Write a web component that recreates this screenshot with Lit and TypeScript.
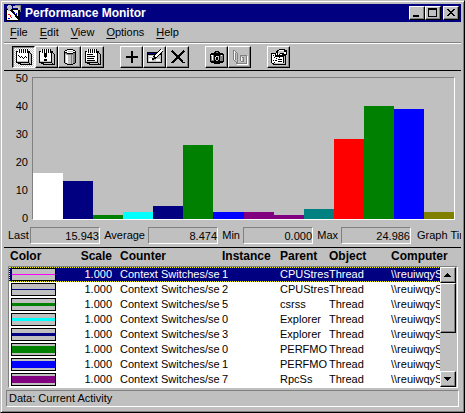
import { LitElement, html, css, svg, TemplateResult } from "lit";
import { customElement, property } from "lit/decorators.js";
import { classMap } from "lit/directives/class-map.js";

const AXIS = [50, 40, 30, 20, 10, 0];
const BARS: [number, string][] = [
  [16.3, "#ffffff"], [13.5, "#000080"], [1.4, "#008000"], [2.5, "#00ffff"],
  [4.6, "#000080"], [26.2, "#008000"], [2.5, "#0000ff"], [2.5, "#800080"],
  [1.4, "#800080"], [3.5, "#008080"], [28.4, "#ff0000"], [40.1, "#008000"],
  [39, "#0000ff"], [2.5, "#808000"],
];
const STATS = [["Last", "15.943"], ["Average", "8.474"], ["Min", "0.000"], ["Max", "24.986"]];
const HEADINGS = ["Color", "Scale", "Counter", "Instance", "Parent", "Object", "Computer"];

interface Row { color: string; width: number; instance: string; parent: string; }
const ROWS: Row[] = [
  { color: "#ff00ff", width: 1, instance: "1", parent: "CPUStres" },
  { color: "#000080", width: 1, instance: "2", parent: "CPUStres" },
  { color: "#008000", width: 3, instance: "5", parent: "csrss" },
  { color: "#00ffff", width: 3, instance: "0", parent: "Explorer" },
  { color: "#000080", width: 3, instance: "3", parent: "Explorer" },
  { color: "#008000", width: 7, instance: "0", parent: "PERFMO" },
  { color: "#0000ff", width: 7, instance: "1", parent: "PERFMO" },
  { color: "#800080", width: 7, instance: "7", parent: "RpcSs" },
];

const pad = svg`
  <path fill="#000" d="M0 2h14v2h1v1h1v11H4v-1H2v-1H0z"/>
  <path fill="#fff" d="M1 3h11v9H1z"/>
  <path fill="#c0c0c0" d="M1 12h11v1H1zM13 4h1v10H3v-1h10zM14 5h1v10H5v-1h9z"/>
  <path fill="#000" d="M12 3h1v10H1v1h12zM14 5v9h-1v1h1z"/>
  <path fill="#fff" d="M2 0h1v2H2zM4 0h1v2H4zM6 0h1v2H6zM8 0h1v2H8zM10 0h1v2h-1zM2 3h1v1H2z"/>
  <path fill="#000" d="M3 0h1v4H3zM5 0h1v4H5zM7 0h1v4H7zM9 0h1v4H9zM11 0h1v4h-1z"/>
  <path fill="#fff" d="M2 2h1v1H2zM4 2h1v1H4zM6 2h1v1H6zM8 2h1v1H8zM10 2h1v1h-1z"/>`;

const ICONS: Record<string, TemplateResult> = {
  chart: svg`${pad}<path fill="#000" d="M2 6h1v1H2zM3 7h1v1H3zM4 8h1v1H4zM5 7h1v1H5zM6 8h1v1H6zM7 9h1v1H7zM8 8h1v1H8zM9 7h1v1H9zM10 8h1v1h-1z"/>`,
  alert: svg`${pad}<path fill="#000" d="M5 4h3v4H5zM6 8h1v1H6zM5 10h3v2H5z"/>`,
  log: svg`
    <path fill="#000" d="M5 0h6v1h2v1h1v12h-1v1h-2v1H5v-1H3v-1H2V2h1V1h2z"/>
    <path fill="#c0c0c0" d="M3 5h2v1h6V5h2v9h-2v1H5v-1H3z"/>
    <path fill="#fff" d="M5 1h6v1h2v1h-2v1H5V3H3V2h2zM4 6h2v8H4z"/>
    <path fill="#c0c0c0" d="M6 2h5v1H6z"/>
    <path fill="#808080" d="M3 4h2v1H3zM5 5h6v1H5zM11 4h2v1h-2zM9 6h1v9H9zM11 5h2v9h-2z"/>`,
  report: svg`${pad}<path fill="#000" d="M2 5h6v1H2zM2 7h8v1H2zM2 9h7v1H2zM2 11h8v1H2z"/>`,
  add: svg`<path fill="#000" d="M7 2h2v5h5v2H9v5H7V9H2V7h5z"/>`,
  modify: svg`
    <path fill="#000" d="M0 3h15v11H0z"/>
    <path fill="#c0c0c0" d="M1 6h13v7H1z"/>
    <path fill="#000080" d="M1 4h10v1H1z"/>
    <path fill="#fff" d="M2 7h4v1H2zM2 9h3v3H2zM9 10h4v2H9z"/>
    <path stroke="#000" fill="none" stroke-width="4" d="M15 1L7 9"/>
    <path stroke="#fff" fill="none" stroke-width="1.5" d="M15 1L8 8"/>
    <path fill="#000" d="M5 9h3v1H7v1H5z"/>`,
  remove: svg`
    <path stroke="#000" fill="none" stroke-width="2.4" d="M2 2l11 11"/>
    <path stroke="#000" fill="none" stroke-width="1.5" d="M14 2L2 14"/>
    <path fill="#000" d="M12 13h3v1h-3zM1 13h2v1H1z"/>`,
  camera: svg`
    <path fill="#000" d="M2 4h3V3h1V2h4v1h1v1h3v1h1v8h-1v1h-3v1H5v-1H2v-1H1V5h1z"/>
    <path fill="#808080" d="M2 6h3v6H2zM11 6h3v6h-3zM7 3h2v1H7z"/>
    <path fill="#fff" d="M2 6h2v1H2zM3 7h1v4H3zM12 6h1v1h-1zM7 7h1v1H7zM6 8h1v1H6z"/>
    <path fill="#c0c0c0" d="M8 7h2v1H8zM9 8h1v3H9zM7 11h2v1H7zM6 9h1v2H6z"/>`,
  bookmark: svg`
    <path fill="#fff" d="M2 2h1v10H2zM3 12h1v1H3zM4 13h1v1H4zM5 15h11v1H5zM15 7h1v9h-1zM9 8h1v4H9z"/>
    <path fill="#808080" d="M1 1h1v10H1zM2 1h1v1H2zM3 2h1v1H3zM4 3h1v1H4zM5 4h1v11H5zM2 11h1v1H2zM3 12h1v1H3zM4 13h1v2H4zM6 14h9v1H6zM14 6h1v8h-1zM8 6h6v1H8zM8 7h1v5H8zM9 12h3v1H9zM11 8h1v4h-1zM10 8h1v1h-1zM3 4h1v7H3z"/>`,
  options: svg`
    <path fill="#000" d="M0 4h5V2h1V1h2V0h6v1h2v5h-1v10H2v-1H1v-1H0z"/>
    <path fill="#fff" d="M1 5h3v9H1zM4 8h8v6H4zM8 1h5v1H8z"/>
    <path fill="#c0c0c0" d="M13 7h1v8H3v-1h10zM7 2h6v2H9v1H7z"/>
    <path fill="#fff" d="M5 4h1v2H5zM7 4h1v2H7zM9 5h2v1H9zM13 3h2v2h-2z"/>
    <path fill="#000" d="M2 6h1v1H2zM3 8h1v1H3zM5 9h1v1H5zM8 8h1v1H8zM2 11h1v1H2zM4 11h2v1H4zM7 10h4v1H7zM7 12h4v1H7zM3 13h1v1H3z"/>`,
};

const TOOLS: [string, string][][] = [
  [["chart", "Chart view"], ["alert", "Alert view"], ["log", "Log view"], ["report", "Report view"]],
  [["add", "Add counter"], ["modify", "Modify counter"], ["remove", "Delete counter"]],
  [["camera", "Update now"], ["bookmark", "Place bookmark"]],
  [["options", "Options"]],
];

@customElement("tool-button")
class ToolButton extends LitElement {
  @property() icon = "";
  @property() label = "";
  @property({ type: Boolean }) pressed = false;

  static styles = css`
    :host { display: block; }
    .tool {
      box-sizing: border-box;
      display: flex;
      align-items: center;
      justify-content: center;
      width: 23px;
      height: 22px;
      padding: 0;
      border: 1px solid;
      border-color: #fff #000 #000 #fff;
      box-shadow: inset -1px -1px #808080;
      background: #c0c0c0;
    }
    .pressed {
      border-color: #000 #fff #fff #000;
      box-shadow: inset 1px 1px #808080;
      background: repeating-conic-gradient(#fff 0 25%, #c0c0c0 0 50%) 0 0 / 2px 2px;
    }
    .icon { display: block; width: 16px; height: 16px; }
  `;

  render() {
    return html`<button class=${classMap({ tool: true, pressed: this.pressed })} aria-label=${this.label}
      ?disabled=${this.icon === "bookmark"}>
      <svg class="icon" viewBox="0 0 16 16" shape-rendering="crispEdges" aria-hidden="true">${ICONS[this.icon]}</svg>
    </button>`;
  }
}

@customElement("counter-chart")
class CounterChart extends LitElement {
  static styles = css`
    :host { display: flex; gap: 4px; padding: 0 6px 0 11px; }
    .axis {
      display: flex;
      flex-direction: column;
      justify-content: space-between;
      flex: 0 0 13px;
      line-height: 15px;
      text-align: right;
    }
    .plot {
      flex: 1;
      display: flex;
      align-items: flex-end;
      margin: 6px 0;
      border: 1px solid;
      border-color: #808080 #fff #fff #808080;
    }
    .bar { flex: 1; }
  `;

  render() {
    return html`
      <div class="axis">${AXIS.map((n) => html`<span>${n}</span>`)}</div>
      <div class="plot" role="img" aria-label="Counter values">
        ${BARS.map(([v, c]) => html`<div class="bar" style="height:${v * 2}%;background:${c}"></div>`)}
      </div>`;
  }
}

@customElement("counter-legend")
class CounterLegend extends LitElement {
  static styles = css`
    :host { display: block; position: relative; }
    .legend, .head, .body { display: block; }
    .line {
      display: grid;
      grid-template-columns: 47px 56px 8px 102px 58px 49px 62px minmax(0, 1fr);
      text-align: left;
      white-space: nowrap;
    }
    .head .line { height: 18px; padding-left: 1px; line-height: 17px; font-size: 12px; }
    .cell { padding: 0; overflow: hidden; font-weight: inherit; }
    .head .cell { font-weight: bold; overflow: visible; }
    .color { padding-left: 2px; }
    .head .color { padding-left: 1px; }
    .scale { grid-column: 2; text-align: right; }
    .counter { grid-column: 4; }
    .body {
      border: 1px solid;
      border-color: #808080 #fff #fff #808080;
      background: #fff;
      line-height: 15px;
    }
    .body .line { height: 15px; padding-right: 17px; }
    .selected {
      background: #000080;
      color: #fff;
      outline: 1px dotted #ff0;
      outline-offset: -1px;
    }
    .swatch {
      box-sizing: border-box;
      display: flex;
      align-items: center;
      height: 13px;
      margin-top: 1px;
      border: 1px solid #000;
      background: #c0c0c0;
    }
    .stroke { width: 100%; }
    .scroll {
      position: absolute;
      top: 19px;
      right: 1px;
      bottom: 1px;
      width: 17px;
      display: flex;
      flex-direction: column;
      background: #c0c0c0;
    }
    .arrow, .thumb {
      box-sizing: border-box;
      width: 16px;
      border: 1px solid;
      border-color: #fff #000 #000 #fff;
      box-shadow: inset -1px -1px #808080;
      background: #c0c0c0;
    }
    .arrow { display: grid; place-items: center; height: 16px; padding: 0; }
    .glyph { display: block; width: 8px; height: 4px; }
    .thumb { height: 50px; }
    .track { flex: 1; }
  `;

  render() {
    return html`
      <table class="legend">
        <thead class="head">
          <tr class="line">
            ${HEADINGS.map((h) => html`<th class="cell ${h.toLowerCase()}" scope="col">${h}</th>`)}
          </tr>
        </thead>
        <tbody class="body">
          ${ROWS.map((r, i) => html`<tr class=${classMap({ line: true, selected: i === 0 })}>
            <td class="cell color"><div class="swatch"><div class="stroke" style="height:${r.width}px;background:${r.color}"></div></div></td>
            <td class="cell scale">1.000</td>
            <td class="cell counter">Context Switches/se</td>
            <td class="cell">${r.instance}</td>
            <td class="cell">${r.parent}</td>
            <td class="cell">Thread</td>
            <td class="cell">\\\\reuiwqyS</td>
          </tr>`)}
        </tbody>
      </table>
      <div class="scroll">
        <button class="arrow" aria-label="Scroll up"><svg class="glyph" viewBox="0 0 8 4" shape-rendering="crispEdges"><path d="M3 0h1v1h1v1h1v1h1v1H0V3h1V2h1V1h1z"/></svg></button>
        <div class="thumb"></div>
        <div class="track"></div>
        <button class="arrow" aria-label="Scroll down"><svg class="glyph" viewBox="0 0 8 4" shape-rendering="crispEdges"><path d="M0 0h7v1H6v1H5v1H4v1H3V3H2V2H1V1H0z"/></svg></button>
      </div>`;
  }
}

@customElement("app-root")
class AppRoot extends LitElement {
  static styles = css`
    :host {
      box-sizing: border-box;
      display: flex;
      flex-direction: column;
      min-height: 100vh;
      padding: 3px;
      border: 1px solid;
      border-color: #c0c0c0 #000 #000 #c0c0c0;
      box-shadow: inset 1px 1px #fff, inset -1px -1px #808080;
      background: #c0c0c0;
      color: #000;
      font: 11px/15px "Liberation Sans", sans-serif;
      overflow: hidden;
    }
    .title {
      display: flex;
      align-items: center;
      height: 18px;
      padding: 0 2px;
      background: #000080;
      color: #fff;
    }
    .logo { width: 16px; height: 16px; margin-right: 3px; }
    .name { flex: 1; margin: 0; font: bold 12px/18px "Liberation Sans", sans-serif; }
    .control {
      box-sizing: border-box;
      display: grid;
      place-items: center;
      width: 16px;
      height: 14px;
      padding: 0;
      border: 1px solid;
      border-color: #fff #000 #000 #fff;
      box-shadow: inset -1px -1px #808080;
      background: #c0c0c0;
    }
    .close { margin-left: 2px; }
    .sign { display: block; width: 10px; height: 10px; }
    .menu {
      display: flex;
      height: 20px;
      border-bottom: 1px solid #808080;
    }
    .item {
      padding: 0 6px;
      border: 0;
      background: none;
      color: inherit;
      font: inherit;
    }
    .key { text-decoration: underline; text-underline-offset: 2px; }
    .tools {
      display: flex;
      gap: 16px;
      padding: 2px 8px;
      border-top: 1px solid #fff;
      border-bottom: 1px solid #000;
    }
    .group { display: flex; }
    .chart { flex: 1; min-height: 155px; }
    .stats {
      display: grid;
      grid-template-columns: 22px 70px 48px 70px 25px 70px 28px 70px minmax(0, 1fr);
      padding: 1px 0 3px 4px;
      border-bottom: 1px solid #000;
      line-height: 17px;
      white-space: nowrap;
    }
    .label { padding-right: 3px; text-align: right; }
    .value {
      box-sizing: border-box;
      height: 17px;
      border: 1px solid;
      border-color: #808080 #fff #fff #808080;
      text-align: right;
    }
    .time { padding-left: 6px; overflow: hidden; }
    .legend { margin: 0 3px 2px 4px; }
    .status {
      margin: 0 2px 2px;
      padding: 0 2px;
      border: 1px solid;
      border-color: #808080 #fff #fff #808080;
    }
  `;

  render() {
    return html`
      <header class="title">
        <svg class="logo" viewBox="0 0 16 16" shape-rendering="crispEdges" aria-hidden="true">
          <path fill="#000" d="M0 4h14v12H0z"/>
          <path fill="#fff" d="M1 5h11v10H1z"/>
          <path fill="#c0c0c0" d="M2 0h3v1h1v3H5v2H2V4H1V1h1zM7 1h7v2H7zM12 3h3v2h-3z"/>
          <path fill="#808080" d="M9 0h6v1H9zM14 1h1v6h-1zM1 3h1v1H1z"/>
          <path stroke="#000" fill="none" stroke-width="2" d="M5 5l8 9"/>
          <path fill="#f00" d="M2 9h2v1H2zM4 10h1v2H4zM5 12h1v1H5z"/>
          <path fill="#00f" d="M2 13h2v1H2zM8 7h1v1H8zM10 8h1v2h-1z"/>
        </svg>
        <h1 class="name">Performance Monitor</h1>
        <button class="control" aria-label="Minimize"><svg class="sign" viewBox="0 0 10 10" shape-rendering="crispEdges"><path d="M1 7h6v2H1z"/></svg></button>
        <button class="control" aria-label="Maximize"><svg class="sign" viewBox="0 0 10 10" shape-rendering="crispEdges"><path fill-rule="evenodd" d="M0 0h9v9H0zM1 2v6h7V2z"/></svg></button>
        <button class="control close" aria-label="Close"><svg class="sign" viewBox="0 0 10 10" shape-rendering="crispEdges"><path d="M1 1h2v1h1v1h2V2h1V1h2v1H8v1H7v1H6v1h1v1h1v1h1v1H7V7H6V6H4v1H3v1H1V7h1V6h1V5h1V4H3V3H2V2H1z"/></svg></button>
      </header>
      <nav class="menu">
        ${["File", "Edit", "View", "Options", "Help"].map((m) => html`<button class="item"><span class="key">${m[0]}</span>${m.slice(1)}</button>`)}
      </nav>
      <div class="tools" role="toolbar">
        ${TOOLS.map((g) => html`<div class="group">
          ${g.map(([icon, label]) => html`<tool-button icon=${icon} label=${label} ?pressed=${icon === "chart"}></tool-button>`)}
        </div>`)}
      </div>
      <counter-chart class="chart"></counter-chart>
      <div class="stats">
        ${STATS.map(([name, value]) => html`<label class="label" for=${name}>${name}</label><output class="value" id=${name}>${value}</output>`)}
        <span class="time">Graph Time</span>
      </div>
      <counter-legend class="legend"></counter-legend>
      <footer class="status">Data: Current Activity</footer>`;
  }
}
